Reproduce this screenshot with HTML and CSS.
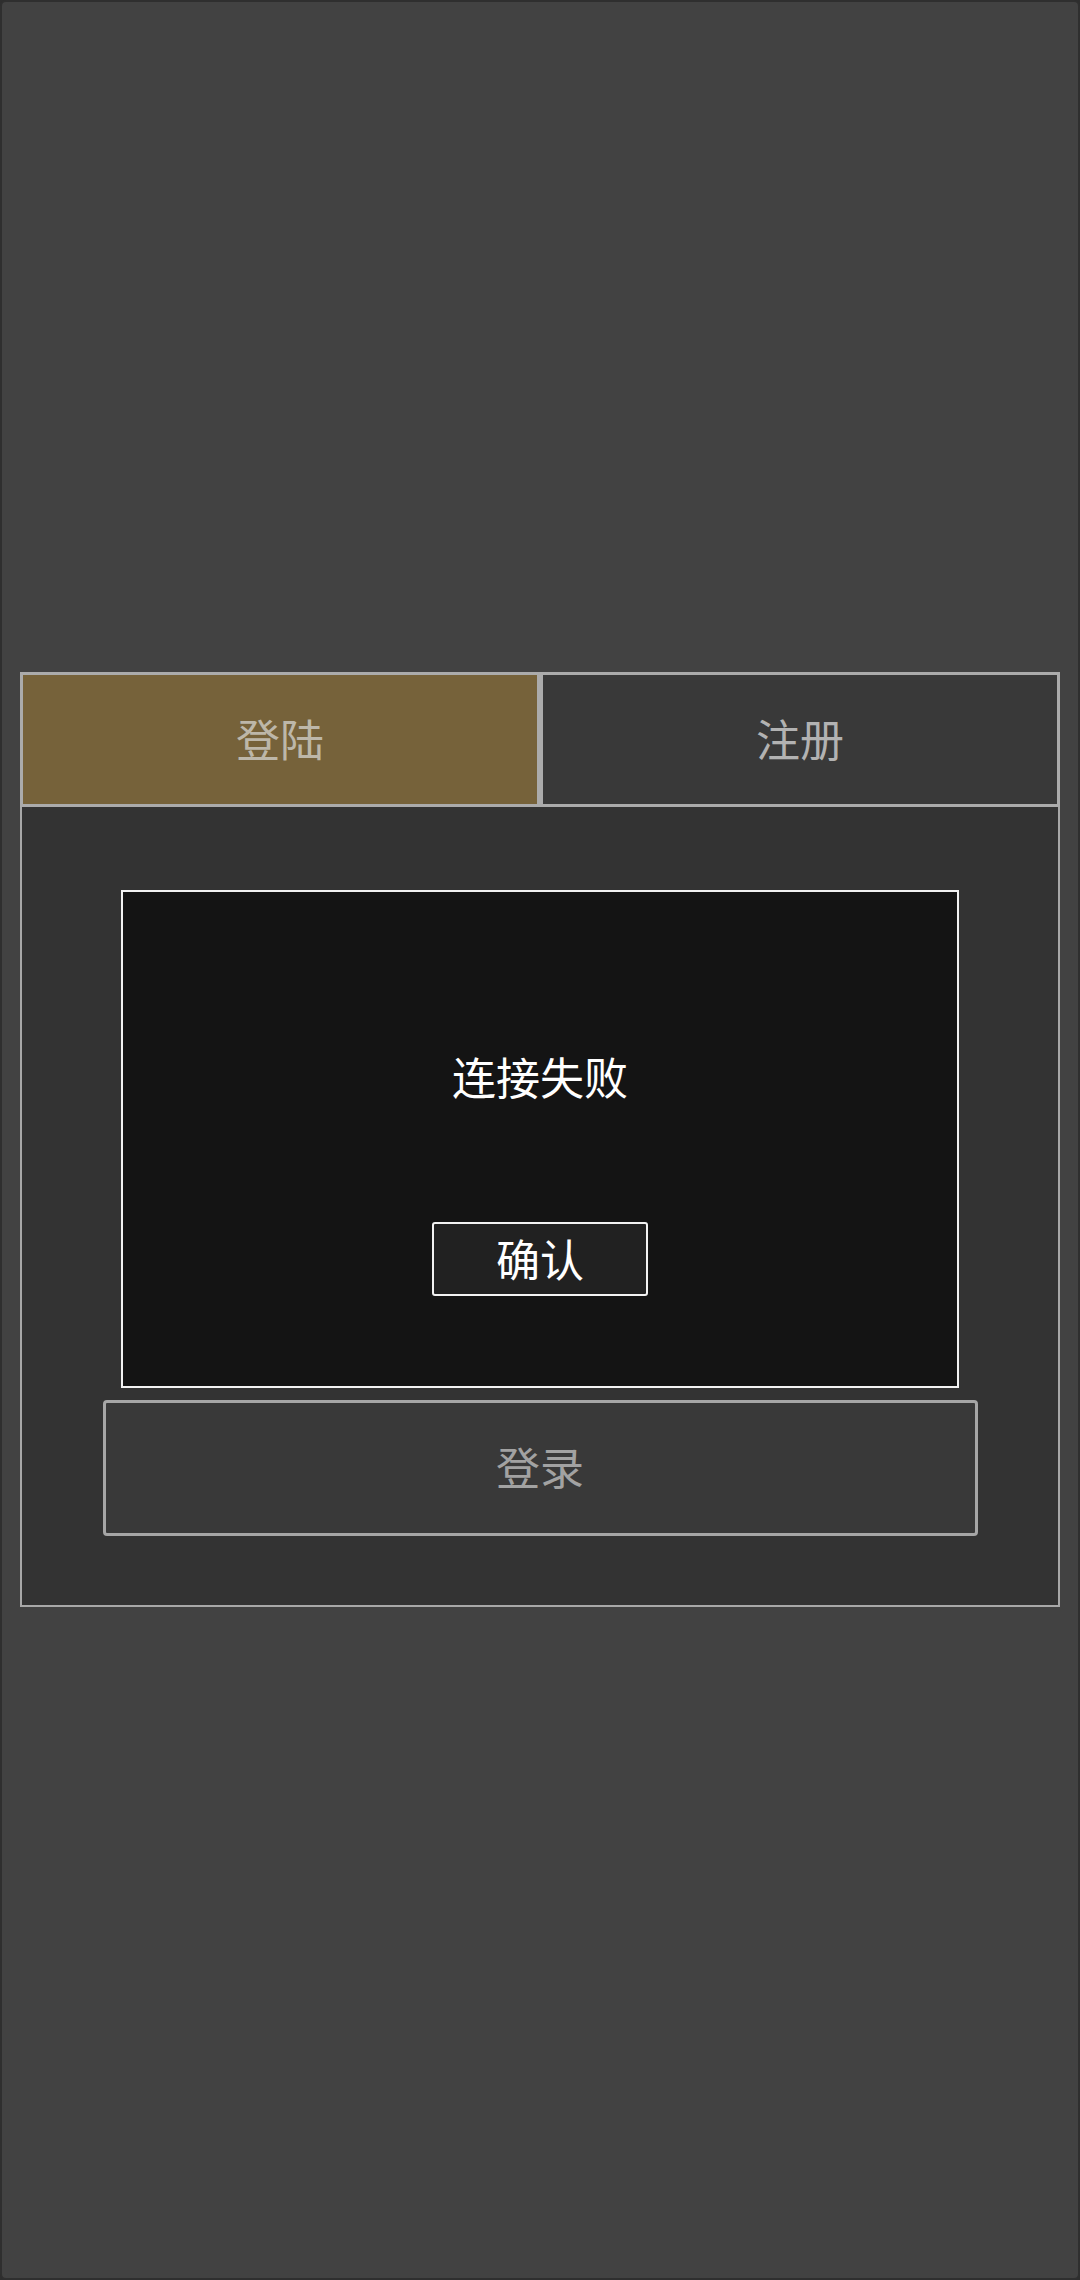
FILE: index.html
```html
<!DOCTYPE html>
<html lang="zh-CN">
<head>
<meta charset="utf-8">
<title>登陆</title>
<link rel="stylesheet" href="styles.css">
</head>
<body>
<div class="screen">
  <div class="card">
    <div class="tabs">
      <div class="tab tab-active">登陆</div>
      <div class="tab">注册</div>
    </div>
    <div class="card-body">
      <div class="dialog">
        <div class="dialog-msg">连接失败</div>
        <div class="dialog-btn">确认</div>
      </div>
      <div class="login-btn">登录</div>
    </div>
  </div>
</div>
</body>
</html>
```

FILE: styles.css
```css
* { box-sizing: border-box; }
html, body { margin: 0; padding: 0; }
body {
  width: 1080px;
  height: 2280px;
  background: #2e2e2e;
  font-family: "Noto Sans CJK SC", "Noto Sans", sans-serif;
}
.screen {
  width: 1080px;
  height: 2280px;
  background: #424242;
  border: 2px solid #2f2f2f;
  border-radius: 6px;
  display: flex;
  flex-direction: column;
  justify-content: center;
  align-items: center;
  padding-bottom: 2px;
}
.card {
  width: 1040px;
  display: flex;
  flex-direction: column;
  background: #333333;
}
.tabs {
  display: flex;
  height: 135px;
}
.tab {
  flex: 1;
  border: 3px solid #ababab;
  background: #393939;
  color: #b2b2b2;
  font-size: 44px;
  display: flex;
  align-items: center;
  justify-content: center;
  padding-bottom: 2px;
}
.tab-active {
  background: #76623a;
  color: #bdb7a9;
}
.card-body {
  border: 2px solid #a8a8a8;
  border-top: 0;
  padding: 83px 0 69px;
  display: flex;
  flex-direction: column;
  align-items: center;
  gap: 12px;
}
.dialog {
  width: 838px;
  height: 498px;
  background: #141414;
  border: 2px solid #f2f2f2;
  display: flex;
  flex-direction: column;
  align-items: center;
  padding-top: 154px;
}
.dialog-msg {
  color: #ffffff;
  font-size: 44px;
  line-height: 60px;
  height: 60px;
}
.dialog-btn {
  margin-top: 116px;
  width: 216px;
  height: 74px;
  border: 2px solid #f2f2f2;
  border-radius: 3px;
  background: #212121;
  color: #ffffff;
  font-size: 44px;
  display: flex;
  align-items: center;
  justify-content: center;
  padding-bottom: 2px;
}
.login-btn {
  width: 875px;
  height: 136px;
  border: 3px solid #a6a6a6;
  border-radius: 4px;
  background: #393939;
  color: #a2a2a2;
  font-size: 44px;
  display: flex;
  align-items: center;
  justify-content: center;
  padding-bottom: 4px;
}
```
